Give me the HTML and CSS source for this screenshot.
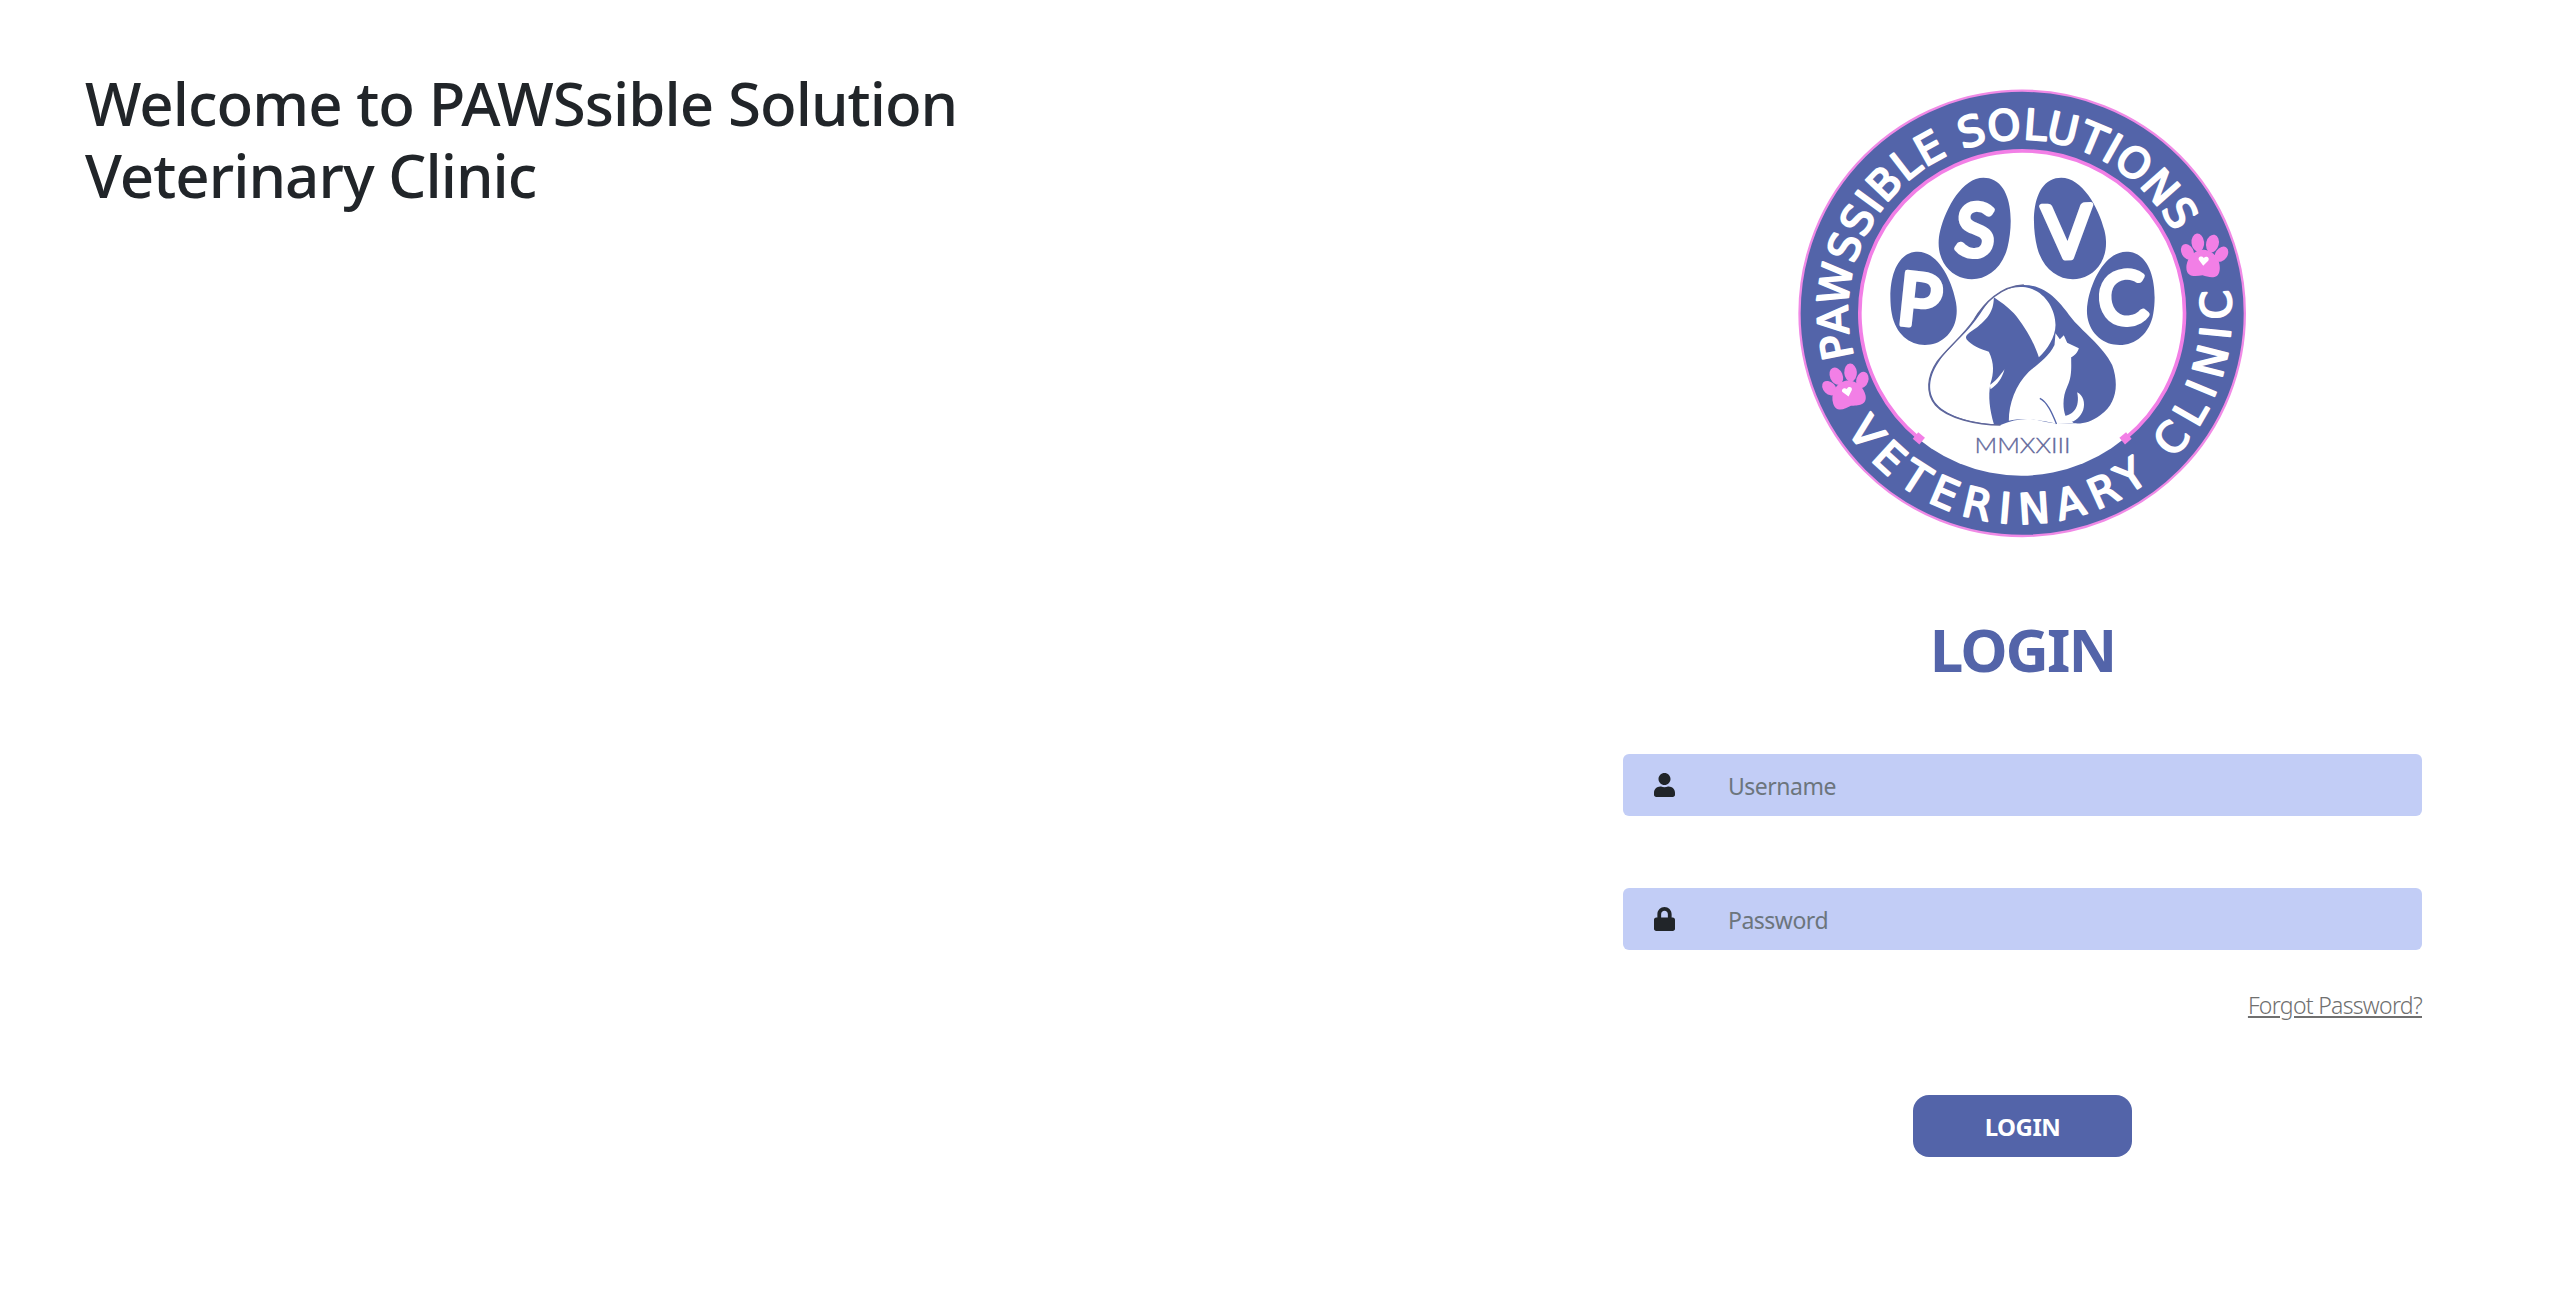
FILE: index.html
```html
<!DOCTYPE html>
<html lang="en">
<head>
  <meta charset="UTF-8" />
  <meta name="viewport" content="width=device-width, initial-scale=1.0" />
  <title>PAWSsible Solution Veterinary Clinic</title>
  <link rel="stylesheet" href="styles.css">
</head>

<body>
  <main class="page">
    <!-- WELCOME -->
    <section class="welcome">
      <h1>Welcome to PAWSsible Solution<br>Veterinary Clinic</h1>
    </section>

    <!-- LOGIN -->
    <section class="login-panel">
      <svg class="logo" viewBox="7.5 0 1440 1440" xmlns="http://www.w3.org/2000/svg">
        <defs>
          <path id="toe" d="M0 -150C72 -150 104 -45 104 32C104 105 55 150 0 150C-55 150 -104 105 -104 32C-104 -45 -72 -150 0 -150Z" />
          <path id="top-arc" d="M220 860A518 518 0 0 1 1184 495" />
          <path id="bottom-arc" d="M198 1080A630 630 0 0 0 1348 656" />
          <g id="pink-paw">
            <ellipse class="pink" cx="-50" cy="-12" rx="18" ry="25" transform="rotate(-32 -50 -12)" />
            <ellipse class="pink" cx="-21" cy="-42" rx="19" ry="27" transform="rotate(-10 -21 -42)" />
            <ellipse class="pink" cx="23" cy="-42" rx="19" ry="27" transform="rotate(10 23 -42)" />
            <ellipse class="pink" cx="52" cy="-12" rx="18" ry="25" transform="rotate(32 52 -12)" />
            <path class="pink" d="M0 -22C30 -22 52 8 50 36C48 66 20 60 0 55C-20 60 -48 66 -50 36C-52 8 -30 -22 0 -22Z" />
            <path class="white" d="M0 26L-14 10C-19 1 -7 -6 0 3C7 -6 19 1 14 10Z" />
          </g>
        </defs>

        <circle class="ring" cx="725" cy="730" r="668" />
        <circle class="white" cx="722" cy="730" r="487" />
        <path class="inner-arc" d="M415 1105A487 487 0 1 1 1035 1105" />
        <rect class="pink" x="402" y="1092" width="26" height="26" transform="rotate(40 415 1105)" />
        <rect class="pink" x="1022" y="1092" width="26" height="26" transform="rotate(-40 1035 1105)" />

        <text class="ring-text"><textPath href="#top-arc" textLength="1514" lengthAdjust="spacing">PAWSSIBLE SOLUTIONS</textPath></text>
        <text class="ring-text"><textPath href="#bottom-arc" textLength="1682" lengthAdjust="spacing">VETERINARY CLINIC</textPath></text>

        <use href="#pink-paw" transform="translate(1270 561) rotate(4)" />
        <use href="#pink-paw" transform="translate(198 954) rotate(-14)" />

        <use class="blue" href="#toe" transform="translate(425 685) rotate(-10) scale(.94 .94)" />
        <use class="blue" href="#toe" transform="translate(588 475) rotate(14) scale(1 1.03)" />
        <use class="blue" href="#toe" transform="translate(863 475) rotate(-14) scale(1 1.03)" />
        <use class="blue" href="#toe" transform="translate(1025 685) rotate(10) scale(.96 .94)" />

        <text class="toe-letter" x="418" y="768" transform="rotate(6 418 690)">P</text>
        <text class="toe-letter" x="585" y="558" transform="rotate(4 585 480)">S</text>
        <text class="toe-letter" x="860" y="563" transform="rotate(-2 860 480)">V</text>
        <text class="toe-letter" x="1025" y="762" transform="rotate(-6 1025 680)">C</text>

        <!-- dog and cat on the big pad -->
        <g transform="translate(360 600)">
          <path class="blue" d="M300 465C230 465 140 445 105 405C75 370 80 320 110 275C140 235 190 195 220 150C250 100 300 48 370 45C440 45 480 100 510 140C540 180 610 230 635 285C655 340 650 400 600 435C570 458 545 462 520 460C480 462 450 460 420 452C380 442 340 448 300 465Z" />
          <path class="white" d="M282 78C255 100 240 135 218 160C190 198 140 235 113 278C84 322 80 368 108 402C142 442 230 462 280 462C268 420 262 380 270 340C280 310 282 280 265 245C245 240 210 225 198 208C192 195 205 190 230 172C255 150 280 130 280 82Z" />
          <path class="white" d="M280 82C310 55 345 48 375 52C430 60 465 115 465 165C465 200 440 240 415 262C400 215 370 165 340 130C320 110 300 95 280 82Z" />
          <path class="white" d="M268 345C285 335 300 315 312 298C305 325 290 345 270 358Z" />
          <path class="white" d="M325 452C325 400 345 345 385 305C415 280 445 260 462 225L465 190L478 208L490 196L500 218L535 235C532 248 520 258 512 262C512 290 515 320 500 350C488 375 485 410 495 438L520 460L470 462C440 455 380 440 325 452Z" />
          <path class="white" d="M530 367C548 375 555 400 548 420C540 440 525 455 505 458L492 438C515 435 540 415 530 367Z" />
          <path class="haunch" d="M418 385C440 395 455 430 468 462" />
          <path class="pad-line" d="M300 465C230 465 140 445 105 405C75 370 80 320 110 275C140 235 190 195 220 150C250 100 300 48 370 45" />
        </g>
        <text class="year" x="582" y="1148" textLength="288" lengthAdjust="spacingAndGlyphs">MMXXIII</text>
      </svg>

      <h2>LOGIN</h2>

      <form class="login-form">
        <label class="field">
          <svg class="field-icon" viewBox="0 0 448 512" xmlns="http://www.w3.org/2000/svg"><path d="M224 256c70.7 0 128-57.3 128-128S294.7 0 224 0 96 57.3 96 128s57.3 128 128 128zm89.6 32h-16.7c-22.2 10.2-46.9 16-72.9 16s-50.6-5.8-72.9-16h-16.7C60.2 288 0 348.2 0 422.4V464c0 26.5 21.5 48 48 48h352c26.5 0 48-21.5 48-48v-41.6c0-74.2-60.2-134.4-134.4-134.4z" /></svg>
          <input type="text" placeholder="Username">
        </label>
        <label class="field">
          <svg class="field-icon" viewBox="0 0 448 512" xmlns="http://www.w3.org/2000/svg"><path d="M400 224h-24v-72C376 68.2 307.8 0 224 0S72 68.2 72 152v72H48c-26.5 0-48 21.5-48 48v192c0 26.5 21.5 48 48 48h352c26.5 0 48-21.5 48-48V272c0-26.5-21.5-48-48-48zm-104 0H152v-72c0-39.7 32.3-72 72-72s72 32.3 72 72v72z" /></svg>
          <input type="password" placeholder="Password">
        </label>
        <a class="forgot" href="#">Forgot Password?</a>
        <button class="login-button" type="button">LOGIN</button>
      </form>
    </section>
  </main>
</body>
</html>
```
FILE: styles.css
```css
body {
  margin: 0;
  font-family: "Noto Sans", "Open Sans", sans-serif;
  background: #fff;
  color: #212529;
}

.page {
  display: flex;
  justify-content: space-between;
  padding-right: 129px;
}

/* WELCOME */
.welcome {
  padding: 67px 0 0 85px;
}

.welcome h1 {
  margin: 0;
  font-size: 60px;
  font-weight: 500;
  line-height: 72px;
  letter-spacing: -.95px;
}

/* LOGIN PANEL */
.login-panel {
  width: 799px;
  padding-top: 70px;
  display: flex;
  flex-direction: column;
  align-items: center;
}

.login-panel h2 {
  margin: 63px 0 69px;
  font-size: 60px;
  font-weight: 700;
  line-height: 72px;
  color: #5364a9;
  letter-spacing: -2px;
}

.login-form {
  width: 100%;
  display: flex;
  flex-direction: column;
  align-items: center;
}

.field {
  width: 100%;
  height: 62px;
  margin-bottom: 72px;
  display: flex;
  align-items: center;
  gap: 53px;
  padding-left: 31px;
  box-sizing: border-box;
  background: #c2cdf6;
  border-radius: 6px;
}

.field:nth-of-type(2) {
  margin-bottom: 0;
}

.field-icon {
  width: 21px;
  height: 24px;
  fill: #212529;
  flex: none;
}

.field input {
  flex: 1;
  border: none;
  outline: none;
  padding: 2px 0 0;
  background: transparent;
  font-family: inherit;
  font-size: 23px;
  letter-spacing: -.5px;
  color: #212529;
}

.field input::placeholder {
  color: #6c757d;
  opacity: 1;
}

.forgot {
  align-self: flex-end;
  margin: 37px 0 72px;
  font-size: 23px;
  font-weight: 300;
  line-height: 36px;
  letter-spacing: -.7px;
  color: #6f6f6f;
}

.login-button {
  width: 219px;
  height: 62px;
  border: none;
  border-radius: 16px;
  background: #5364a9;
  color: #fff;
  font-family: inherit;
  font-size: 24px;
  font-weight: 700;
  cursor: pointer;
  letter-spacing: -.5px;
}

/* LOGO */
.logo {
  width: 480px;
  height: 480px;
  flex: none;
}

.logo .blue {
  fill: #5364a9;
}

.logo .white {
  fill: #fff;
}

.logo .pink {
  fill: #f27fe6;
}

.ring {
  fill: #5364a9;
  stroke: #f08ae6;
  stroke-width: 7;
}

.inner-arc {
  fill: none;
  stroke: #f27fe6;
  stroke-width: 11;
}

.ring-text {
  font-family: "DejaVu Sans", sans-serif;
  font-size: 126px;
  font-weight: 400;
  fill: #fff;
  stroke: #fff;
  stroke-width: 6;
  stroke-linejoin: round;
}

.toe-letter {
  font-family: Lato, sans-serif;
  font-size: 218px;
  font-weight: 400;
  fill: #fff;
  stroke: #fff;
  stroke-width: 16;
  stroke-linejoin: round;
  text-anchor: middle;
}

.haunch {
  fill: none;
  stroke: #5364a9;
  stroke-width: 4;
}

.pad-line {
  fill: none;
  stroke: #5f6699;
  stroke-width: 4;
}

.year {
  font-family: Lato, sans-serif;
  font-size: 64px;
  font-weight: 300;
  fill: #5f6699;
  stroke: #5f6699;
  stroke-width: 1;
}
```
